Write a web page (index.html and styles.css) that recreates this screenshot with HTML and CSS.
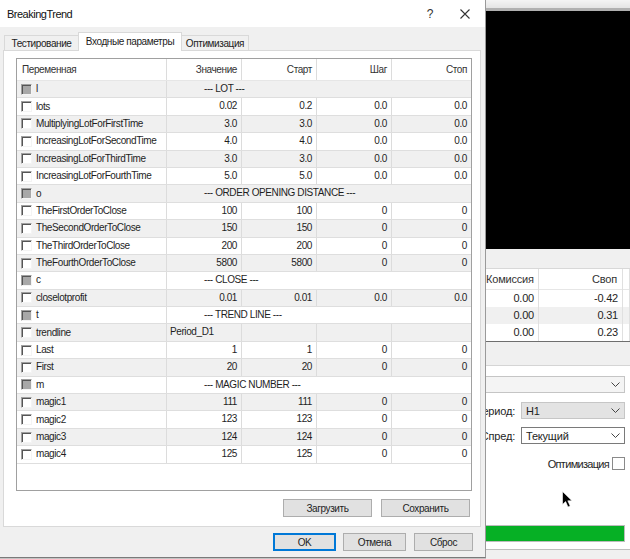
FILE: index.html
```html
<!DOCTYPE html>
<html lang="ru">
<head>
<meta charset="utf-8">
<title>BreakingTrend</title>
<link rel="stylesheet" href="styles.css">
</head>
<body>
<div class="dialog">
  <div class="titlebar">
    <span class="title">BreakingTrend</span>
    <span class="tb-help">?</span>
    <span class="tb-close"><svg width="10" height="10" viewBox="0 0 10 10"><path d="M0.5 0.5 L9.5 9.5 M9.5 0.5 L0.5 9.5" stroke="#333" stroke-width="1.1" fill="none"/></svg></span>
  </div>
  <div class="body">
    <div class="tabs">
      <div class="tab t1">Тестирование</div>
      <div class="tab t2 active">Входные параметры</div>
      <div class="tab t3">Оптимизация</div>
    </div>
    <div class="panel">
      <div class="grid">
        <div class="row head">
          <div class="c">Переменная</div>
          <div class="c num">Значение</div>
          <div class="c num">Старт</div>
          <div class="c num">Шаг</div>
          <div class="c num">Стоп</div>
        </div>
        <div class="row alt grp"><div class="c name"><span class="cb g"></span>l</div><div class="c span">--- LOT ---</div></div>
        <div class="row"><div class="c name"><span class="cb"></span>lots</div><div class="c num">0.02</div><div class="c num">0.2</div><div class="c num">0.0</div><div class="c num">0.0</div></div>
        <div class="row alt"><div class="c name"><span class="cb"></span>MultiplyingLotForFirstTime</div><div class="c num">3.0</div><div class="c num">3.0</div><div class="c num">0.0</div><div class="c num">0.0</div></div>
        <div class="row"><div class="c name"><span class="cb"></span>IncreasingLotForSecondTime</div><div class="c num">4.0</div><div class="c num">4.0</div><div class="c num">0.0</div><div class="c num">0.0</div></div>
        <div class="row alt"><div class="c name"><span class="cb"></span>IncreasingLotForThirdTime</div><div class="c num">3.0</div><div class="c num">3.0</div><div class="c num">0.0</div><div class="c num">0.0</div></div>
        <div class="row"><div class="c name"><span class="cb"></span>IncreasingLotForFourthTime</div><div class="c num">5.0</div><div class="c num">5.0</div><div class="c num">0.0</div><div class="c num">0.0</div></div>
        <div class="row alt grp"><div class="c name"><span class="cb g"></span>o</div><div class="c span">--- ORDER OPENING DISTANCE ---</div></div>
        <div class="row"><div class="c name"><span class="cb"></span>TheFirstOrderToClose</div><div class="c num">100</div><div class="c num">100</div><div class="c num">0</div><div class="c num">0</div></div>
        <div class="row alt"><div class="c name"><span class="cb"></span>TheSecondOrderToClose</div><div class="c num">150</div><div class="c num">150</div><div class="c num">0</div><div class="c num">0</div></div>
        <div class="row"><div class="c name"><span class="cb"></span>TheThirdOrderToClose</div><div class="c num">200</div><div class="c num">200</div><div class="c num">0</div><div class="c num">0</div></div>
        <div class="row alt"><div class="c name"><span class="cb"></span>TheFourthOrderToClose</div><div class="c num">5800</div><div class="c num">5800</div><div class="c num">0</div><div class="c num">0</div></div>
        <div class="row grp"><div class="c name"><span class="cb g"></span>c</div><div class="c span">--- CLOSE ---</div></div>
        <div class="row alt"><div class="c name"><span class="cb"></span>closelotprofit</div><div class="c num">0.01</div><div class="c num">0.01</div><div class="c num">0.0</div><div class="c num">0.0</div></div>
        <div class="row grp"><div class="c name"><span class="cb g"></span>t</div><div class="c span">--- TREND LINE ---</div></div>
        <div class="row alt"><div class="c name"><span class="cb"></span>trendline</div><div class="c">Period_D1</div><div class="c"></div><div class="c"></div><div class="c"></div></div>
        <div class="row"><div class="c name"><span class="cb"></span>Last</div><div class="c num">1</div><div class="c num">1</div><div class="c num">0</div><div class="c num">0</div></div>
        <div class="row alt"><div class="c name"><span class="cb"></span>First</div><div class="c num">20</div><div class="c num">20</div><div class="c num">0</div><div class="c num">0</div></div>
        <div class="row grp"><div class="c name"><span class="cb g"></span>m</div><div class="c span">--- MAGIC NUMBER ---</div></div>
        <div class="row alt"><div class="c name"><span class="cb"></span>magic1</div><div class="c num">111</div><div class="c num">111</div><div class="c num">0</div><div class="c num">0</div></div>
        <div class="row"><div class="c name"><span class="cb"></span>magic2</div><div class="c num">123</div><div class="c num">123</div><div class="c num">0</div><div class="c num">0</div></div>
        <div class="row alt"><div class="c name"><span class="cb"></span>magic3</div><div class="c num">124</div><div class="c num">124</div><div class="c num">0</div><div class="c num">0</div></div>
        <div class="row"><div class="c name"><span class="cb"></span>magic4</div><div class="c num">125</div><div class="c num">125</div><div class="c num">0</div><div class="c num">0</div></div>
      </div>
      <div class="panel-buttons">
        <button class="btn wide">Загрузить</button>
        <button class="btn wide">Сохранить</button>
      </div>
    </div>
    <div class="footer">
      <button class="btn ok">OK</button>
      <button class="btn cancel">Отмена</button>
      <button class="btn reset">Сброс</button>
    </div>
  </div>
</div>
<div class="backdrop">
  <div class="bd-top"></div>
  <div class="chart"></div>
  <div class="bd-gap"></div>
  <div class="bd-table">
    <div class="bt-row bt-head"><span>Комиссия</span><span>Своп</span><span></span></div>
    <div class="bt-row"><span>0.00</span><span>-0.42</span><span></span></div>
    <div class="bt-row alt"><span>0.00</span><span>0.31</span><span></span></div>
    <div class="bt-row"><span>0.00</span><span>0.23</span><span></span></div>
  </div>
  <div class="bd-gap2"></div>
  <div class="settings">
    <div class="combo full"><span></span><svg class="chev" width="9" height="5" viewBox="0 0 9 5"><path d="M0.5 0.5 L4.5 4.5 L8.5 0.5" stroke="#444" fill="none"/></svg></div>
    <div class="field"><span class="lbl">Период:</span><div class="combo dis"><span>H1</span><svg class="chev" width="9" height="5" viewBox="0 0 9 5"><path d="M0.5 0.5 L4.5 4.5 L8.5 0.5" stroke="#444" fill="none"/></svg></div></div>
    <div class="field"><span class="lbl">Спред:</span><div class="combo white"><span>Текущий</span><svg class="chev" width="9" height="5" viewBox="0 0 9 5"><path d="M0.5 0.5 L4.5 4.5 L8.5 0.5" stroke="#444" fill="none"/></svg></div></div>
    <div class="field opt"><span class="lbl">Оптимизация</span><span class="chk"></span></div>
    <div class="progress"></div>
  </div>
  <div class="bd-bottom"></div>
  <svg class="cursor" width="11" height="17" viewBox="0 0 11 17"><path d="M0.5 0.5 L0.5 13.5 L3.6 10.6 L6 16 L8.2 15 L5.8 9.8 L10 9.8 Z" fill="#000" stroke="#fff" stroke-width="0.6"/></svg>
</div>
</body>
</html>
```
FILE: styles.css
```css
* { box-sizing: border-box; margin: 0; padding: 0; }
html, body { width: 630px; height: 559px; overflow: hidden; }
body {
  font-family: "Liberation Sans", Arial, sans-serif;
  font-size: 11px;
  color: #1e1e1e;
  background: #c4c4c4;
  display: flex;
  align-items: flex-start;
}
.dialog {
  flex: none;
  width: 486px;
  height: 558px;
  background: #f0f0f0;
  border-right: 1px solid #9a9a9a;
  border-bottom: 1px solid #7a7a7a;
  display: flex;
  flex-direction: column;
  font-size: 10px;
  letter-spacing: -0.4px;
}
.titlebar {
  height: 27px;
  background: #fff;
  display: flex;
  align-items: center;
  padding-left: 7px;
  font-size: 11px;
  letter-spacing: -0.5px;
  color: #111;
}
.title { flex: 1; }
.tb-help { width: 30px; text-align: center; font-size: 12px; letter-spacing: 0; color: #333; }
.tb-close { width: 40px; display: flex; justify-content: center; align-items: center; }
.body { flex: 1; display: flex; flex-direction: column; padding: 5px 4px 0 3px; }
.tabs { height: 18px; display: flex; align-items: flex-end; padding-left: 1px; position: relative; z-index: 1; }
.tab {
  height: 15px;
  border: 1px solid #d9d9d9;
  border-bottom: none;
  background: #f0f0f0;
  display: flex;
  align-items: center;
  justify-content: center;
  color: #222;
  white-space: nowrap;
}
.t1 { width: 74px; border-right: none; }
.t2 { width: 104px; }
.t3 { width: 67px; border-left: none; }
.tab.active { height: 19px; margin-bottom: -1px; background: #fff; padding-bottom: 2px; }
.panel {
  width: 478px;
  height: 477px;
  background: #fff;
  border: 1px solid #d9d9d9;
  padding: 7px 0 0 12px;
}
.grid {
  width: 456px;
  height: 433px;
  border: 1px solid #a0a0a0;
  background: #fff;
  overflow: hidden;
}
.row {
  display: grid;
  grid-template-columns: 150px 75px 75px 75px 1fr;
  height: 17.4px;
  border-bottom: 1px solid #dedede;
  line-height: 16px;
}
.row.alt { background: #f0f0f0; }
.row.head { height: 22px; line-height: 21px; border-bottom: 1px solid #e6e6e6; background: #fff; color: #333; }
.row.head .c:first-child { padding-left: 5px; }
.c {
  border-right: 1px solid #dcdcdc;
  padding: 0 4px 0 3px;
  white-space: nowrap;
  overflow: hidden;
}
.row .c:last-child { border-right: none; }
.num { text-align: right; }
.name { display: flex; align-items: center; padding-left: 4px; }
.span { grid-column: 2 / -1; padding-left: 37px; }
.cb {
  flex: none;
  width: 11px;
  height: 11px;
  margin-right: 4px;
  background: #fff;
  border-top: 1px solid #a0a0a0;
  border-left: 1px solid #a0a0a0;
  border-right: 1px solid #f4f4f4;
  border-bottom: 1px solid #f4f4f4;
  box-shadow: inset 1px 1px 0 #555;
}
.cb.g { background: #a8a8a8; }
.panel-buttons {
  width: 456px;
  display: flex;
  justify-content: flex-end;
  gap: 9px;
  padding-right: 2px;
  margin-top: 8px;
}
.btn {
  font: inherit;
  letter-spacing: inherit;
  color: #1e1e1e;
  height: 18px;
  background: #e1e1e1;
  border: 1px solid #adadad;
  display: flex;
  align-items: center;
  justify-content: center;
}
.btn.wide { width: 89px; }
.footer { display: flex; justify-content: flex-end; gap: 7px; padding: 6px 8px 0 0; }
.btn.ok { width: 63px; border-color: #0078d7; box-shadow: inset 0 0 0 1px #0078d7; }
.btn.cancel { width: 63px; margin-right: 1px; }
.btn.reset { width: 59px; }

.backdrop {
  flex: 1;
  height: 559px;
  display: flex;
  flex-direction: column;
  overflow: hidden;
  position: relative;
  background: #f0f0f0;
  letter-spacing: -0.2px;
}
.bd-top {
  height: 11px;
  flex: none;
  background: linear-gradient(#f4f4f4, #e4e4e4);
  border-bottom: 3px solid #8c8c8c;
  border-image: linear-gradient(#c8c8c8 0 33%, #505050 33% 66%, #b0b0b0 66%) 1;
  border-top: none;
  border-left: none;
  border-right: none;
}
.chart { height: 238px; flex: none; background: #000; }
.bd-gap { height: 19px; flex: none; background: #f0f0f0; }
.bd-table { flex: none; background: #fff; border-top: 1px solid #d8d8d8; border-bottom: 1px solid #6e6e6e; }
.bt-row { display: grid; grid-template-columns: 53px 84px 1fr; height: 17px; line-height: 17px; }
.bt-row span { text-align: right; padding-right: 4px; border-right: 1px solid #e0e0e0; white-space: nowrap; }
.bt-row.alt { background: #f0f0f0; }
.bt-head { height: 21px; line-height: 21px; border-bottom: 1px solid #e6e6e6; color: #333; }
.bt-head span { padding-right: 5px; }
.bd-gap2 { height: 24px; flex: none; background: #f0f0f0; border-bottom: 1px solid #d5d5d5; }
.settings {
  flex: none;
  height: 183px;
  background: #fff;
  display: flex;
  flex-direction: column;
  align-items: stretch;
  padding: 10px 5px 0 0;
}
.combo {
  flex: none;
  height: 17px;
  border: 1px solid #c5c5c5;
  background: #f4f4f4;
  display: flex;
  align-items: center;
  justify-content: space-between;
  padding: 0 4px 0 4px;
  color: #1e1e1e;
}
.combo.full { margin-left: -6px; }
.combo.dis { width: 104px; background: #e3e3e3; border-color: #c6c6c6; }
.combo.white { width: 104px; background: #fff; border-color: #7a7a7a; }
.chev { flex: none; }
.field { display: flex; justify-content: flex-end; align-items: center; margin-top: 9px; white-space: nowrap; }
.field + .field { margin-top: 8px; }
.lbl { flex: none; margin-right: 6px; color: #1e1e1e; }
.field.opt { margin-top: 13px; }
.field.opt .lbl { margin-right: 3px; letter-spacing: -0.7px; }
.chk { flex: none; width: 13px; height: 13px; border: 1px solid #8a8a8a; background: #fff; }
.progress { margin-top: 55px; height: 17px; background: #06b025; border: 1px solid #bcbcbc; border-left: none; }
.bd-bottom { flex: 1; background: #f0f0f0; border-top: 1px solid #bdbdbd; }
.cursor { position: absolute; left: 76px; top: 491px; }
```
